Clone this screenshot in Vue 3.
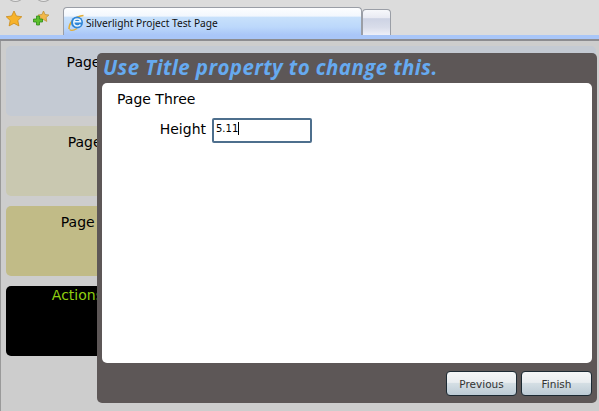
<template>
  <div class="page">
    <header class="toolbar">
      <div class="nav-stubs">
        <span class="nav-stub" />
        <span class="nav-stub" />
      </div>
      <div class="tab-strip">
        <div class="favs">
          <svg width="18" height="18" viewBox="0 0 18 18">
            <path d="M9 1l2.400 5 5.400.7-4 3.800 1.100 5.400L9 13.300 4.100 15.900l1.100-5.400-4-3.800 5.400-.7z" fill="#f7b32b" stroke="#c98a1b" stroke-width="0.8" />
          </svg>
          <svg width="18" height="18" viewBox="0 0 18 18">
            <path d="M11.500 1l1.600 3.500 3.800.5-2.800 2.600.7 3.800-3.300-1.800-3.300 1.800.7-3.800L6.100 5l3.800-.5z" fill="#f2b84b" stroke="#b98d2d" stroke-width="0.7" />
            <path d="M4.500 6h3v3h3v3h-3v3h-3v-3h-3V9h3z" fill="#5cc02c" stroke="#2f8a17" stroke-width="0.8" />
          </svg>
        </div>
        <div class="tab active">
          <svg class="ie" width="17" height="17" viewBox="0 0 17 17">
            <path d="M1 15C1 9 7 2 15.500 1.500" fill="none" stroke="#e3ae35" stroke-width="1.600" />
            <path d="M1.500 15.500c2 1.500 5 .5 7.500-1" fill="none" stroke="#e3ae35" stroke-width="1.200" />
            <circle cx="9" cy="8.500" r="6" fill="#2f86d8" />
            <path d="M5.800 7.800h6.800C12.400 6 11 5 9.200 5 7.200 5 5.800 6.500 5.800 8.600s1.500 3.400 3.500 3.400c1.400 0 2.500-.5 3.200-1.500" fill="none" stroke="#e8f5ff" stroke-width="1.500" />
          </svg>
          <span>Silverlight Project Test Page</span>
        </div>
        <div class="tab new" />
      </div>
      <div class="blue-line" />
    </header>

    <main class="content">
      <section v-for="p in panels" :key="p.title" class="panel" :class="p.cls">
        <div class="panel-title">{{ p.title }}</div>
      </section>

      <div class="wizard">
        <div class="wizard-title">Use Title property to change this.</div>
        <div class="wizard-body">
          <div class="step-title">Page Three</div>
          <div class="field">
            <label class="field-label">Height</label>
            <div class="field-input">5.11<span class="caret" /></div>
          </div>
        </div>
        <div class="wizard-buttons">
          <button class="btn">Previous</button>
          <button class="btn">Finish</button>
        </div>
      </div>
    </main>
  </div>
</template>

<script setup>
const panels = [
  { title: 'Page One', cls: 'p1' },
  { title: 'Page Two', cls: 'p2' },
  { title: 'Page Three', cls: 'p3' },
  { title: 'Actions Panel', cls: 'p4' }
]
</script>

<style>
html,
body {
  margin: 0;
  overflow: hidden;
}
</style>

<style scoped>
.page {
  width: 599px;
  height: 411px;
  display: flex;
  flex-direction: column;
  overflow: hidden;
  background: #cdcdcd;
  font-family: "DejaVu Sans", sans-serif;
}

.toolbar {
  background: #dcdcdc;
  position: relative;
  height: 41px;
  flex: none;
}

.nav-stubs {
  position: absolute;
  top: -6px;
  left: 9px;
  display: flex;
  gap: 15px;
}

.nav-stub {
  width: 11px;
  height: 6px;
  border: 1px solid #a8a8a8;
  border-radius: 50%;
  background: #e8e8e8;
}

.tab-strip {
  display: flex;
  align-items: flex-end;
  height: 35px;
}

.favs {
  width: 63px;
  height: 28px;
  display: flex;
  gap: 9px;
  padding: 3px 0 0 5px;
  box-sizing: border-box;
  align-items: flex-start;
}

.tab {
  box-sizing: border-box;
  border: 1px solid #9a9ea6;
  border-bottom: none;
  border-radius: 4px 4px 0 0;
}

.tab.active {
  width: 299px;
  height: 28px;
  padding: 2px 0 0 4px;
  display: flex;
  align-items: center;
  gap: 1px;
  font-family: "Noto Sans", sans-serif;
  font-size: 10.2px;
  color: #111;
  background: linear-gradient(#fdfeff 0, #f2f7fd 30%, #c8e1fb 34%, #bcd8fb 70%, #a9c6f8 100%);
}

.tab.new {
  width: 29px;
  height: 26px;
  background: linear-gradient(#f7f8fb 0, #e9ebf3 30%, #cdd3e4 35%, #d9ddea 70%, #eef0f8 100%);
}

.blue-line {
  height: 6px;
  box-sizing: border-box;
  background: #a9c6f8;
  border-bottom: 2px solid #8c8c90;
}

.content {
  flex: 1;
  position: relative;
  border-left: 1px solid #9a9a9a;
  padding: 5px 3px 0 5px;
  display: flex;
  flex-direction: column;
  gap: 10px;
}

.panel {
  height: 70px;
  flex: none;
  border-radius: 5px;
}

.panel-title {
  width: 188px;
  text-align: center;
  font-size: 14px;
  line-height: 16px;
  padding-top: 8px;
  white-space: nowrap;
  color: #000;
}

.p1 {
  background: #c4cad3;
}

.p2 {
  background: #c9c8b0;
}

.p3 {
  background: #c1bb87;
}

.p4 {
  background: #000;
}

.p4 .panel-title {
  width: 185px;
  padding-top: 1px;
  color: #8fd010;
}

.wizard {
  position: absolute;
  left: 96px;
  top: 12px;
  width: 500px;
  height: 350px;
  box-sizing: border-box;
  display: flex;
  flex-direction: column;
  padding: 0 5px;
  border-radius: 5px;
  background: #5d5757;
}

.wizard-title {
  height: 30px;
  line-height: 28px;
  font-family: "Open Sans", sans-serif;
  font-size: 20.5px;
  letter-spacing: 0.4px;
  font-weight: bold;
  font-style: italic;
  color: #66aaf0;
  white-space: nowrap;
  overflow: hidden;
  padding-left: 1px;
}

.wizard-body {
  height: 280px;
  flex: none;
  background: #fff;
  border-radius: 5px;
  padding: 6px 15px;
  box-sizing: border-box;
}

.step-title {
  font-size: 14px;
  color: #000;
  line-height: 20px;
}

.field {
  display: flex;
  align-items: center;
  gap: 6px;
  margin-top: 9px;
}

.field-label {
  width: 89px;
  padding-bottom: 3px;
  text-align: right;
  font-size: 14px;
  color: #000;
}

.field-input {
  width: 100px;
  height: 25px;
  box-sizing: border-box;
  border: 2px solid #4e6f8d;
  border-radius: 2px;
  padding-left: 2px;
  font-size: 10px;
  line-height: 18px;
  color: #000;
}

.caret {
  display: inline-block;
  width: 1px;
  height: 13px;
  background: #000;
  vertical-align: -3px;
}

.wizard-buttons {
  flex: 1;
  display: flex;
  justify-content: flex-end;
  gap: 4px;
  padding-top: 8px;
}

.btn {
  width: 71px;
  height: 25px;
  border: 1px solid #1c2a33;
  border-radius: 4px;
  padding: 0;
  font-family: "DejaVu Sans", sans-serif;
  font-size: 10.5px;
  color: #333;
  background: linear-gradient(#f4f6f7 0, #e9edf0 45%, #d4dee4 50%, #bccbd5 100%);
}
</style>
